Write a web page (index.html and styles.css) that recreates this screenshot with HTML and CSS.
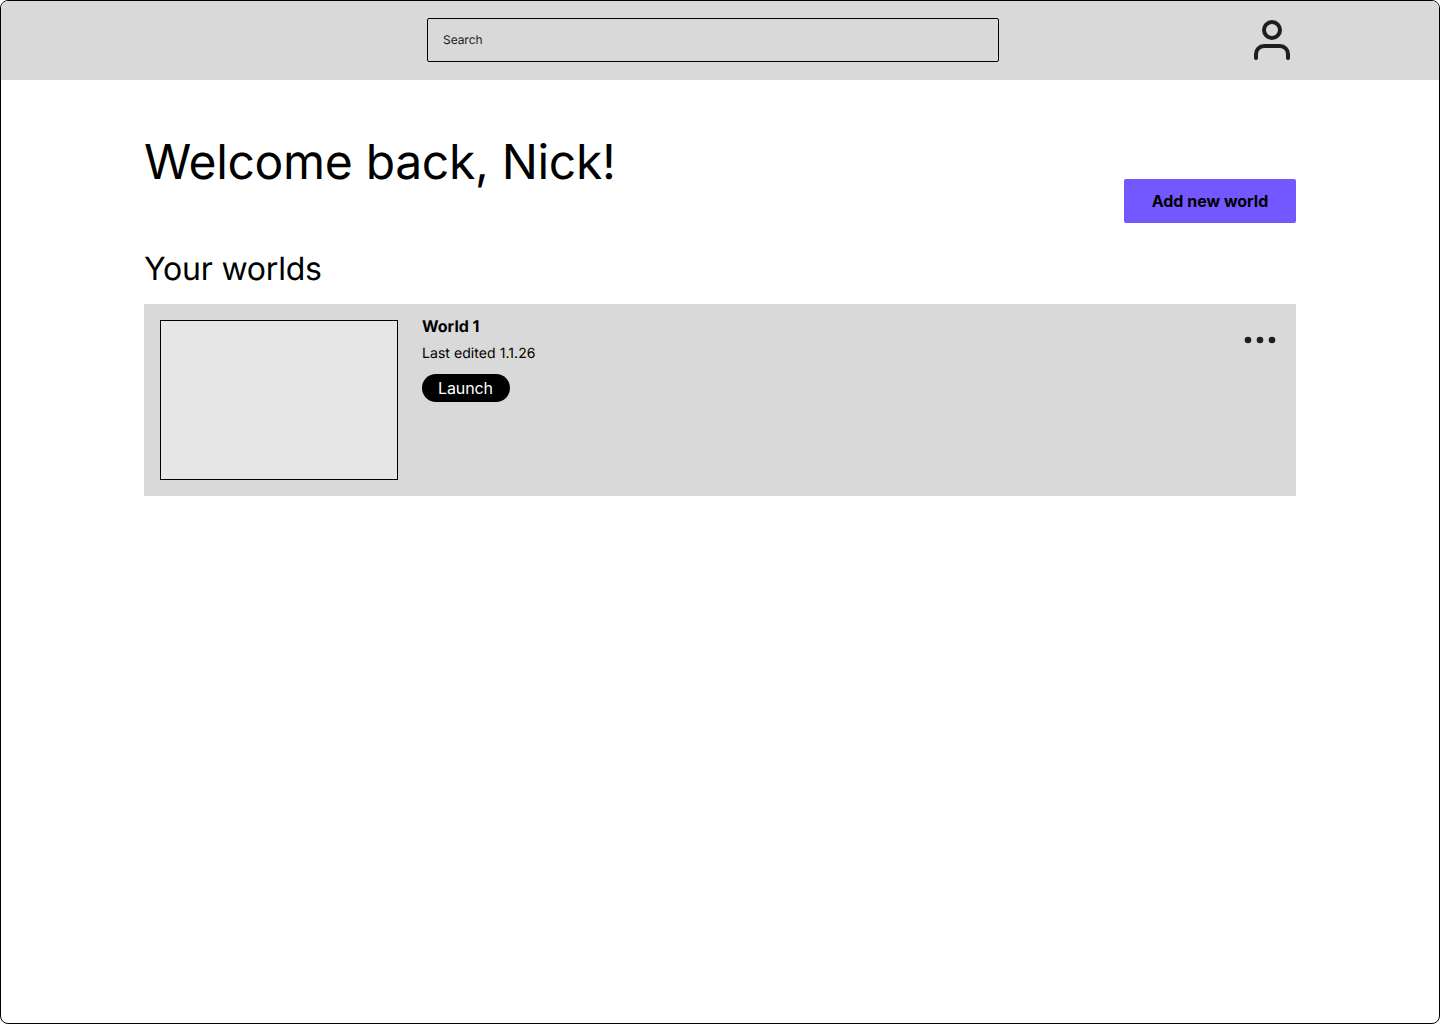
FILE: index.html
```html
<!DOCTYPE html>
<html lang="en">
<head>
  <meta charset="UTF-8">
  <title>Your worlds</title>
  <link rel="stylesheet" href="styles.css">
</head>
<body>

<div class="frame">
  <header class="topbar">
    <div class="search">Search</div>
    <svg class="avatar" width="48" height="48" viewBox="0 0 48 48" fill="none" stroke="#1e1e1e" stroke-width="4" stroke-linecap="round" stroke-linejoin="round">
      <circle cx="24" cy="14" r="8"></circle>
      <path d="M8 42v-4a8 8 0 0 1 8-8h16a8 8 0 0 1 8 8v4"></path>
    </svg>
  </header>

  <main class="content">
    <div class="title-row">
      <h1>Welcome back, Nick!</h1>
      <button class="add-btn">Add new world</button>
    </div>

    <h2>Your worlds</h2>

    <section class="world-card">
      <div class="thumb"></div>
      <div class="world-info">
        <h3>World 1</h3>
        <p>Last edited 1.1.26</p>
        <button class="launch-btn">Launch</button>
      </div>
      <svg class="more" width="32" height="8" viewBox="0 0 32 8" fill="#1e1e1e">
        <circle cx="4" cy="4" r="3.3"></circle>
        <circle cx="16" cy="4" r="3.3"></circle>
        <circle cx="28" cy="4" r="3.3"></circle>
      </svg>
    </section>
  </main>
</div>

</body>
</html>
```

FILE: styles.css
```css
* {
  box-sizing: border-box;
}

body {
  margin: 0;
  font-family: 'Inter', 'Liberation Sans', sans-serif;
  color: #000;
  background-color: #fff;
  text-rendering: geometricPrecision;
}

.frame {
  width: 1440px;
  height: 1024px;
  border: 1px solid #000;
  border-radius: 8px;
  overflow: hidden;
  background-color: #fff;
}

.topbar {
  display: flex;
  align-items: center;
  justify-content: space-between;
  height: 79px;
  padding: 0 143px 1px 426px;
  background-color: #d9d9d9;
}

.search {
  display: flex;
  align-items: center;
  width: 572px;
  height: 44px;
  padding: 0 0 1px 15px;
  border: 1px solid #000;
  border-radius: 2px;
  font-size: 12px;
  letter-spacing: -0.06px;
  color: #1e1e1e;
}

.content {
  padding: 53px 143px 0;
}

.title-row {
  display: flex;
  justify-content: space-between;
  align-items: flex-end;
  height: 90px;
}

h1 {
  align-self: flex-start;
  margin: 0;
  font-size: 48px;
  font-weight: 400;
  letter-spacing: -0.32px;
  line-height: 58px;
}

.add-btn {
  width: 172px;
  height: 44px;
  border: none;
  border-radius: 2px;
  background-color: #7357ff;
  color: #000;
  font-family: inherit;
  font-size: 16px;
  font-weight: 700;
}

h2 {
  margin: 27px 0 16px;
  font-size: 32px;
  font-weight: 400;
  letter-spacing: -0.2px;
  line-height: 38px;
}

.world-card {
  display: flex;
  height: 192px;
  padding: 16px;
  background-color: #d9d9d9;
}

.thumb {
  width: 238px;
  height: 160px;
  border: 1px solid #000;
  background-color: #e6e6e6;
}

.world-info {
  flex: 1;
  margin-left: 24px;
}

h3 {
  margin: 0;
  font-size: 16px;
  font-weight: 700;
  line-height: 12px;
}

.world-info p {
  margin: 12px 0 0;
  font-size: 14px;
  letter-spacing: 0.06px;
  line-height: 20px;
}

.launch-btn {
  display: block;
  width: 88px;
  height: 28px;
  margin-top: 10px;
  padding: 0 1px 0 0;
  border: none;
  border-radius: 14px;
  background-color: #000;
  color: #fff;
  font-family: inherit;
  font-size: 16px;
  letter-spacing: -0.1px;
}

.more {
  margin: 16px 4px 0 0;
}
```
